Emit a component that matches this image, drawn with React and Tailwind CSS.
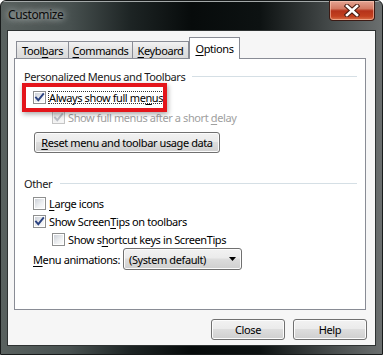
import React from "react";

function U({ children }) {
  return <span className="underline underline-offset-2 decoration-1">{children}</span>;
}

function Check({ checked, disabled }) {
  return (
    <span
      className={
        "w-[13px] h-[13px] shrink-0 flex items-center justify-center border " +
        (disabled ? "border-[#c5c5c5] bg-[#f4f4f4]" : "border-[#8e8f8f] bg-white")
      }
    >
      <span
        className={
          "w-[9px] h-[9px] relative " +
          (disabled
            ? "bg-[linear-gradient(135deg,#e6e6e6,#f8f8f8)]"
            : "bg-[linear-gradient(135deg,#cdd1d8,#eef0f2_60%,#fbfbfb)]")
        }
      >
        {checked && (
          <svg width="11" height="11" viewBox="0 0 11 11" className="absolute -left-px -top-px">
            <path
              d="M2 5.6 L4.3 8.2 L9.2 2.2"
              fill="none"
              stroke={disabled ? "#b8bcc4" : "#2b4280"}
              strokeWidth="1.9"
              strokeLinecap="square"
            />
          </svg>
        )}
      </span>
    </span>
  );
}

function Button({ children, className }) {
  return (
    <div
      className={
        "h-[21px] flex items-center justify-center rounded-[3px] border border-[#707070] shadow-[inset_0_0_0_1px_#fcfcfc] bg-[linear-gradient(to_bottom,#f2f2f2_0%,#ebebeb_45%,#dddddd_50%,#cfcfcf_100%)] text-[#000] " +
        className
      }
    >
      {children}
    </div>
  );
}

export default function App() {
  return (
    <div className="w-[383px] h-[355px] flex flex-col border border-[#171a1a] rounded-t-[6px] overflow-hidden bg-[linear-gradient(to_right,#59615f_0%,#485150_18%,#1d2424_34%,#070b0b_50%,#0d1212_68%,#4a4f4f_88%,#6b6f6f_100%)] font-['Noto_Sans',sans-serif] text-[11px] tracking-[-0.4px] whitespace-nowrap text-black leading-none">
      {/* title bar */}
      <div className="h-[29px] shrink-0 flex items-start justify-between shadow-[inset_0_1px_0_#a3a8a8]">
        <div className="pl-[7px] pt-[8px] text-[12px] text-[#0b0b0b] [text-shadow:0_0_6px_rgba(230,235,235,0.9),0_0_10px_rgba(200,205,205,0.7)]">
          Customize
        </div>
        <div className="mr-[7px] w-[46px] h-[20px] rounded-b-[4px] border border-t-0 border-[#3b1a14] shadow-[inset_0_0_0_1px_rgba(255,210,190,0.55)] bg-[linear-gradient(to_bottom,#e4a493_0%,#d37a63_40%,#b5321a_52%,#c2401f_80%,#d8704a_100%)] flex items-center justify-center">
          <svg width="16" height="13" viewBox="0 0 16 13">
            <path d="M3 2 L13 11 M13 2 L3 11" stroke="#4a1c12" strokeWidth="4.6" strokeLinecap="square" />
            <path d="M3 2 L13 11 M13 2 L3 11" stroke="#ffffff" strokeWidth="2.6" strokeLinecap="square" />
          </svg>
        </div>
      </div>

      {/* client */}
      <div className="flex-1 mx-[6px] mb-[8px] bg-[#f6f6f6] border border-[#2e3232] flex flex-col">
        {/* tabs */}
        <div className="flex items-end pl-[8px] pt-[6px]">
          <div className="w-[53px] h-[17px] border border-b-0 border-[#898c95] bg-[linear-gradient(to_bottom,#f2f2f2,#e3e3e3_50%,#dadada)] flex items-center justify-center pt-px">
            <span>Tool<U>b</U>ars</span>
          </div>
          <div className="w-[64px] h-[17px] border border-b-0 border-l-0 border-[#898c95] bg-[linear-gradient(to_bottom,#f2f2f2,#e3e3e3_50%,#dadada)] flex items-center justify-center pt-px">
            <span><U>C</U>ommands</span>
          </div>
          <div className="w-[56px] h-[17px] border border-b-0 border-l-0 border-[#898c95] bg-[linear-gradient(to_bottom,#f2f2f2,#e3e3e3_50%,#dadada)] flex items-center justify-center pt-px">
            <span><U>K</U>eyboard</span>
          </div>
          <div className="relative z-10 -mb-px w-[51px] h-[22px] border border-b-0 border-[#898c95] bg-white flex items-start justify-center pt-[5px]">
            <span><U>O</U>ptions</span>
          </div>
        </div>

        {/* panel */}
        <div className="relative ml-[6px] mr-[9px] h-[252px] border border-[#898c95] bg-white flex flex-col">
          {/* header */}
          <div className="mt-[10px] h-[14px] flex items-center pl-[9px] pr-[8px]">
            <span className="text-[#1a1a1a]">Personalized Menus and Toolbars</span>
            <span className="flex-1 h-px bg-[#d5dfe5] ml-[7px]" />
          </div>

          {/* row 1 */}
          <div className="mt-[6px] h-[17px] flex items-center pl-[18px]">
            <Check checked />
            <span className="ml-[2px] px-px py-[1px] outline outline-1 outline-dotted outline-[#333] -outline-offset-1">
              Always show full me<U>n</U>us
            </span>
          </div>

          {/* row 2 */}
          <div className="mt-[3px] h-[17px] flex items-center pl-[37px]">
            <Check checked disabled />
            <span className="ml-[3px] text-[#a0a0a0]">
              Show full menus after a short <U>d</U>elay
            </span>
          </div>

          {/* reset button */}
          <div className="mt-[6px] pl-[19px]">
            <Button className="w-[186px]">
              <span><U>R</U>eset menu and toolbar usage data</span>
            </Button>
          </div>

          {/* Other header */}
          <div className="mt-[23px] h-[14px] flex items-center pl-[9px] pr-[8px]">
            <span className="text-[#1a1a1a]">Other</span>
            <span className="flex-1 h-px bg-[#d5dfe5] ml-[8px]" />
          </div>

          <div className="mt-[4px] h-[18px] flex items-center pl-[18px]">
            <Check />
            <span className="ml-[3px]"><U>L</U>arge icons</span>
          </div>
          <div className="h-[18px] flex items-center pl-[18px]">
            <Check checked />
            <span className="ml-[3px]">Show Screen<U>T</U>ips on toolbars</span>
          </div>
          <div className="h-[18px] flex items-center pl-[37px]">
            <Check />
            <span className="ml-[3px]">Show s<U>h</U>ortcut keys in ScreenTips</span>
          </div>

          <div className="mt-[0px] h-[22px] flex items-center pl-[18px]">
            <span className="w-[90px]"><U>M</U>enu animations:</span>
            <div className="w-[119px] h-[22px] rounded-[3px] border border-[#707070] shadow-[inset_0_0_0_1px_#fcfcfc] bg-[linear-gradient(to_bottom,#f2f2f2_0%,#ebebeb_45%,#dddddd_50%,#cfcfcf_100%)] flex items-center pl-[5px] pr-[5px]">
              <span className="flex-1">(System default)</span>
              <svg width="7" height="4" viewBox="0 0 7 4">
                <path d="M0 0 H7 L3.5 4 Z" fill="#000" />
              </svg>
            </div>
          </div>

          {/* annotation */}
          <div className="absolute left-[7px] top-[24px] w-[145px] h-[29px] border-[4px] border-[#e4151b] shadow-[1px_2px_5px_rgba(0,0,0,0.35)]" />
        </div>

        {/* bottom buttons */}
        <div className="mt-[9px] flex justify-end gap-[8px] pr-[8px]">
          <Button className="w-[74px]">Close</Button>
          <Button className="w-[74px]">Help</Button>
        </div>
      </div>
    </div>
  );
}
